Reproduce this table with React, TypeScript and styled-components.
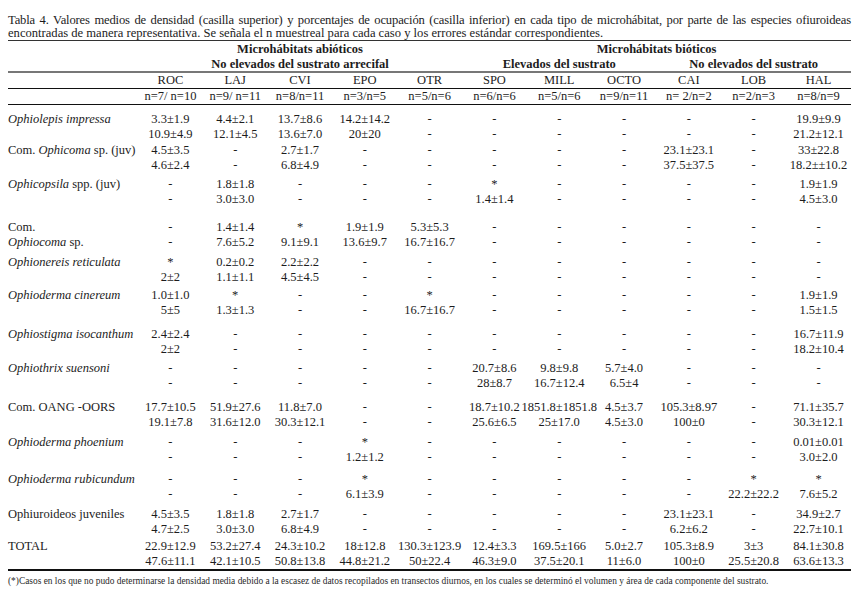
import React from "react";
import styled, { createGlobalStyle } from "styled-components";

const GlobalStyle = createGlobalStyle`
  html, body {
    margin: 0;
    background: #ffffff;
  }
  body {
    font-family: "Liberation Serif", "Times New Roman", serif;
    color: #1c1c1c;
  }
`;

const Page = styled.div`
  width: 843px;
  padding: 14px 8px 0;
`;

const CaptionLine = styled.div<{ $justify?: boolean }>`
  font-size: 12.6px;
  line-height: 13px;
  white-space: nowrap;
  letter-spacing: ${(p) => (p.$justify ? "-0.15px" : "0")};
  text-align: ${(p) => (p.$justify ? "justify" : "left")};
  text-align-last: ${(p) => (p.$justify ? "justify" : "left")};
`;

const Table = styled.table`
  width: 843px;
  border-collapse: collapse;
  table-layout: fixed;
  font-size: 12.5px;
  border-top: 1px solid #333;
  border-bottom: 2px solid #111;
`;

const Row = styled.tr<{ $rule?: "thick" | "thin" }>`
  border-bottom: ${(p) =>
    p.$rule === "thick" ? "2px solid #777" : p.$rule === "thin" ? "1px solid #111" : "none"};
`;

const HeadCell = styled.th<{ $h: number; $bold?: boolean }>`
  height: ${(p) => p.$h}px;
  padding: 0;
  line-height: 13px;
  font-weight: ${(p) => (p.$bold ? 700 : 400)};
  text-align: center;
  white-space: nowrap;
  vertical-align: middle;
`;

const Label = styled.td<{ $pad: number }>`
  padding: ${(p) => p.$pad}px 0 0;
  height: 15px;
  line-height: 15px;
  text-align: left;
  white-space: nowrap;
  vertical-align: top;
`;

const Cell = styled.td<{ $pad: number }>`
  padding: ${(p) => p.$pad}px 0 0;
  height: 15px;
  line-height: 15px;
  text-align: center;
  white-space: nowrap;
  vertical-align: top;
`;

const Val = styled.span`
  display: inline-block;
  margin: 0 -40px;
`;

const Footnote = styled.div`
  margin-top: 4px;
  font-size: 9.4px;
  line-height: 12px;
  color: #2a2a2a;
  white-space: nowrap;
`;

type Group = {
  label: React.ReactNode;
  label2?: React.ReactNode;
  pad: number;
  top: string[];
  bottom: string[];
};

const codes = ["ROC", "LAJ", "CVI", "EPO", "OTR", "SPO", "MILL", "OCTO", "CAI", "LOB", "HAL"];
const sizes = [
  "n=7/ n=10",
  "n=9/ n=11",
  "n=8/n=11",
  "n=3/n=5",
  "n=5/n=6",
  "n=6/n=6",
  "n=5/n=6",
  "n=9/n=11",
  "n= 2/n=2",
  "n=2/n=3",
  "n=8/n=9",
];

const d = "-";

const groups: Group[] = [
  {
    label: <i>Ophiolepis impressa</i>,
    pad: 7,
    top: ["3.3±1.9", "4.4±2.1", "13.7±8.6", "14.2±14.2", d, d, d, d, d, d, "19.9±9.9"],
    bottom: ["10.9±4.9", "12.1±4.5", "13.6±7.0", "20±20", d, d, d, d, d, d, "21.2±12.1"],
  },
  {
    label: (
      <>
        Com. <i>Ophicoma</i> sp. (juv)
      </>
    ),
    pad: 1,
    top: ["4.5±3.5", d, "2.7±1.7", d, d, d, d, d, "23.1±23.1", d, "33±22.8"],
    bottom: ["4.6±2.4", d, "6.8±4.9", d, d, d, d, d, "37.5±37.5", d, "18.2±±10.2"],
  },
  {
    label: (
      <>
        <i>Ophicopsila</i> spp. (juv)
      </>
    ),
    pad: 4,
    top: [d, "1.8±1.8", d, d, d, "*", d, d, d, d, "1.9±1.9"],
    bottom: [d, "3.0±3.0", d, d, d, "1.4±1.4", d, d, d, d, "4.5±3.0"],
  },
  {
    label: "Com.",
    label2: (
      <>
        <i>Ophiocoma</i> sp.
      </>
    ),
    pad: 13,
    top: [d, "1.4±1.4", "*", "1.9±1.9", "5.3±5.3", d, d, d, d, d, d],
    bottom: [d, "7.6±5.2", "9.1±9.1", "13.6±9.7", "16.7±16.7", d, d, d, d, d, d],
  },
  {
    label: <i>Ophionereis reticulata</i>,
    pad: 5,
    top: ["*", "0.2±0.2", "2.2±2.2", d, d, d, d, d, d, d, d],
    bottom: ["2±2", "1.1±1.1", "4.5±4.5", d, d, d, d, d, d, d, d],
  },
  {
    label: <i>Ophioderma cinereum</i>,
    pad: 3,
    top: ["1.0±1.0", "*", d, d, "*", d, d, d, d, d, "1.9±1.9"],
    bottom: ["5±5", "1.3±1.3", d, d, "16.7±16.7", d, d, d, d, d, "1.5±1.5"],
  },
  {
    label: <i>Ophiostigma isocanthum</i>,
    pad: 9,
    top: ["2.4±2.4", d, d, d, d, d, d, d, d, d, "16.7±11.9"],
    bottom: ["2±2", d, d, d, d, d, d, d, d, d, "18.2±10.4"],
  },
  {
    label: <i>Ophiothrix suensoni</i>,
    pad: 4,
    top: [d, d, d, d, d, "20.7±8.6", "9.8±9.8", "5.7±4.0", d, d, d],
    bottom: [d, d, d, d, d, "28±8.7", "16.7±12.4", "6.5±4", d, d, d],
  },
  {
    label: "Com. OANG -OORS",
    pad: 9,
    top: [
      "17.7±10.5",
      "51.9±27.6",
      "11.8±7.0",
      d,
      d,
      "18.7±10.2",
      "1851.8±1851.8",
      "4.5±3.7",
      "105.3±8.97",
      d,
      "71.1±35.7",
    ],
    bottom: ["19.1±7.8", "31.6±12.0", "30.3±12.1", d, d, "25.6±6.5", "25±17.0", "4.5±3.0", "100±0", d, "30.3±12.1"],
  },
  {
    label: <i>Ophioderma phoenium</i>,
    pad: 5,
    top: [d, d, d, "*", d, d, d, d, d, d, "0.01±0.01"],
    bottom: [d, d, d, "1.2±1.2", d, d, d, d, d, d, "3.0±2.0"],
  },
  {
    label: <i>Ophioderma rubicundum</i>,
    pad: 7,
    top: [d, d, d, "*", d, d, d, d, d, "*", "*"],
    bottom: [d, d, d, "6.1±3.9", d, d, d, d, d, "22.2±22.2", "7.6±5.2"],
  },
  {
    label: "Ophiuroideos juveniles",
    pad: 5,
    top: ["4.5±3.5", "1.8±1.8", "2.7±1.7", d, d, d, d, d, "23.1±23.1", d, "34.9±2.7"],
    bottom: ["4.7±2.5", "3.0±3.0", "6.8±4.9", d, d, d, d, d, "6.2±6.2", d, "22.7±10.1"],
  },
  {
    label: "TOTAL",
    pad: 2,
    top: [
      "22.9±12.9",
      "53.2±27.4",
      "24.3±10.2",
      "18±12.8",
      "130.3±123.9",
      "12.4±3.3",
      "169.5±166",
      "5.0±2.7",
      "105.3±8.9",
      "3±3",
      "84.1±30.8",
    ],
    bottom: [
      "47.6±11.1",
      "42.1±10.5",
      "50.8±13.8",
      "44.8±21.2",
      "50±22.4",
      "46.3±9.0",
      "37.5±20.1",
      "11±6.0",
      "100±0",
      "25.5±20.8",
      "63.6±13.3",
    ],
  },
];

function SpeciesRows({ g }: { g: Group }): JSX.Element {
  return (
    <>
      <tr>
        <Label $pad={g.pad}>{g.label}</Label>
        {g.top.map((v, i) => (
          <Cell key={i} $pad={g.pad}>
            <Val>{v}</Val>
          </Cell>
        ))}
      </tr>
      <tr>
        <Label $pad={0}>{g.label2}</Label>
        {g.bottom.map((v, i) => (
          <Cell key={i} $pad={0}>
            <Val>{v}</Val>
          </Cell>
        ))}
      </tr>
    </>
  );
}

function App(): JSX.Element {
  return (
    <Page>
      <GlobalStyle />
      <CaptionLine $justify>
        Tabla 4. Valores medios de densidad (casilla superior) y porcentajes de ocupación (casilla inferior) en
        cada tipo de microhábitat, por parte de las especies ofiuroideas
      </CaptionLine>
      <CaptionLine>
        encontradas de manera representativa. Se señala el n muestreal para cada caso y los errores estándar
        correspondientes.
      </CaptionLine>

      <Table>
        <colgroup>
          <col style={{ width: 130 }} />
          {codes.map((c) => (
            <col key={c} style={{ width: 64.8 }} />
          ))}
        </colgroup>
        <thead>
          <Row>
            <HeadCell $h={17} />
            <HeadCell $h={17} $bold colSpan={5}>
              Microhábitats abióticos
            </HeadCell>
            <HeadCell $h={17} $bold colSpan={6}>
              Microhábitats bióticos
            </HeadCell>
          </Row>
          <Row $rule="thick">
            <HeadCell $h={11} />
            <HeadCell $h={11} $bold colSpan={5}>
              No elevados del sustrato arrecifal
            </HeadCell>
            <HeadCell $h={11} $bold colSpan={3}>
              Elevados del sustrato
            </HeadCell>
            <HeadCell $h={11} $bold colSpan={3}>
              No elevados del sustrato
            </HeadCell>
          </Row>
          <Row $rule="thin">
            <HeadCell $h={15} />
            {codes.map((c) => (
              <HeadCell key={c} $h={15}>
                {c}
              </HeadCell>
            ))}
          </Row>
          <Row $rule="thin">
            <HeadCell $h={15} />
            {sizes.map((s, i) => (
              <HeadCell key={i} $h={15}>
                {s}
              </HeadCell>
            ))}
          </Row>
        </thead>
        <tbody>
          {groups.map((g, i) => (
            <SpeciesRows key={i} g={g} />
          ))}
        </tbody>
      </Table>

      <Footnote>
        (*)Casos en los que no pudo determinarse la densidad media debido a la escasez de datos recopilados en
        transectos diurnos, en los cuales se determinó el volumen y área de cada componente del sustrato.
      </Footnote>
    </Page>
  );
}

export default App;
